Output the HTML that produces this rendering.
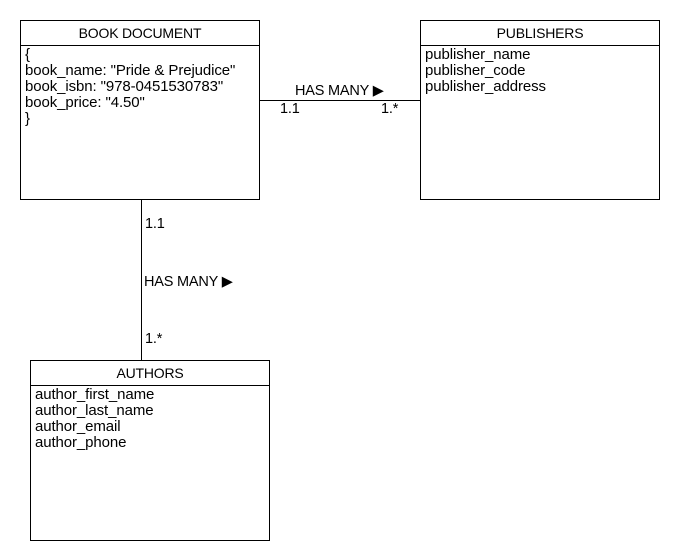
<!DOCTYPE html>
<html><head><style>
body{margin:0;width:680px;height:560px;background:#fff;position:relative;font-family:"Liberation Sans",sans-serif;font-size:14.5px;color:#000;overflow:hidden}
.box{position:absolute;border:1px solid #000;box-sizing:border-box;background:#fff}
.h{height:24px;border-bottom:1px solid #000;text-align:center;line-height:24px;font-size:14px;letter-spacing:-0.2px}
.b{padding:1px 4px 0;line-height:16px;white-space:pre;font-size:15px;letter-spacing:-0.1px}
.t{position:absolute;white-space:nowrap;letter-spacing:-0.2px;line-height:16px}
.l{position:absolute;background:#000}
</style></head><body>
<div class="l" style="left:260px;top:100px;width:160px;height:1px"></div>
<div class="l" style="left:141px;top:199px;width:1px;height:161px"></div>
<div class="box" style="left:20px;top:20px;width:240px;height:180px"><div class="h">BOOK DOCUMENT</div><div class="b">{
book_name: "Pride &amp; Prejudice"
book_isbn: "978-0451530783"
book_price: "4.50"
}</div></div>
<div class="box" style="left:420px;top:20px;width:240px;height:180px"><div class="h">PUBLISHERS</div><div class="b">publisher_name
publisher_code
publisher_address</div></div>
<div class="box" style="left:30px;top:360px;width:240px;height:181px"><div class="h">AUTHORS</div><div class="b">author_first_name
author_last_name
author_email
author_phone</div></div>
<div class="t" style="left:295px;top:83px">HAS MANY ▶</div>
<div class="t" style="left:280px;top:101px">1.1</div>
<div class="t" style="left:381px;top:101px">1.*</div>
<div class="t" style="left:145px;top:216px">1.1</div>
<div class="t" style="left:144px;top:274px">HAS MANY ▶</div>
<div class="t" style="left:145px;top:331px">1.*</div>
</body></html>
